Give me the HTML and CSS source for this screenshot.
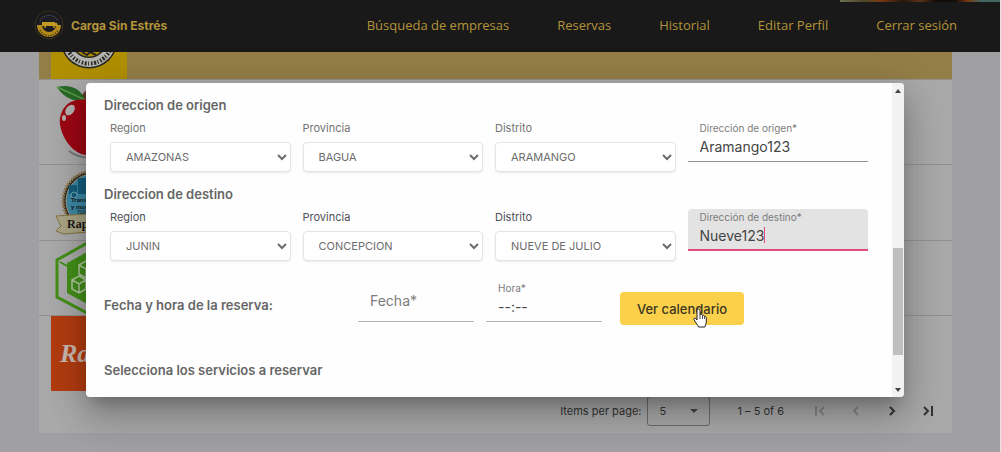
FILE: index.html
```html
<!DOCTYPE html>
<html lang="es">
<head>
<meta charset="utf-8">
<meta name="viewport" content="width=device-width, initial-scale=1">
<title>Carga Sin Estrés</title>
<link rel="stylesheet" href="styles.css">
</head>
<body>
<header class="topbar">
  <a class="brand" href="#">
    <svg class="brand-logo" viewBox="0 0 30 30" aria-hidden="true">
      <circle cx="15" cy="15" r="14" fill="#161616" stroke="#3f3421"/>
      <circle cx="15" cy="15" r="12" fill="#1c1d22"/>
      <path d="M3 15h24a12 12 0 0 1-24 0z" fill="#b48a18"/>
      <path d="M8 15h14a7 7 0 0 1-14 0z" fill="#1c1d22"/>
      <path d="M8 12h13v4H8zM21 13h2l1 3h-3z" fill="#c49a20"/>
      <circle cx="11" cy="17" r="1" fill="#c49a20"/><circle cx="20" cy="17" r="1" fill="#c49a20"/>
      <path d="M6 11a10 10 0 0 1 18 0" fill="none" stroke="#666" stroke-dasharray="1 1"/>
      <path d="M6 20a10 10 0 0 0 18 0" fill="none" stroke="#5d4817" stroke-width="1.5" stroke-dasharray="1.5 1"/>
    </svg>
    <span>Carga Sin Estrés</span>
  </a>
  <nav class="nav">
    <a href="#">Búsqueda de empresas</a>
    <a href="#">Reservas</a>
    <a href="#">Historial</a>
    <a href="#">Editar Perfil</a>
    <a href="#">Cerrar sesión</a>
  </nav>
  <div class="banner-edge"></div>
</header>

<main class="page">
  <table class="companies">
    <tbody>
      <tr class="row-highlight"><td>
        <svg width="76" height="27" viewBox="0 0 76 27" aria-hidden="true">
          <rect width="76" height="27" fill="#b09000"/>
          <circle cx="38" cy="-12" r="28.500" fill="#292820"/>
          <circle cx="38" cy="-12" r="27" fill="#b5b5b2"/>
          <circle cx="38" cy="-12" r="18" fill="#292820"/>
          <circle cx="38" cy="-12" r="16.500" fill="#b09000"/>
          <path d="M31 0l5 3 3-3 6 3" fill="none" stroke="#292820" stroke-width="2"/>
          <path d="M17 -2A23 23 0 0 0 59 -2" fill="none" stroke="#292820" stroke-width="4" stroke-dasharray="1.500 1.500 2 1.500 1 2"/>
        </svg></td></tr>
      <tr class="row-tall"><td>
        <svg width="76" height="84" viewBox="0 0 76 84" aria-hidden="true">
          <path d="M30 17c4-7 9-10 12-9l-5 15z" fill="#60372a"/>
          <path d="M6 7c10-3 24 0 28 13C23 23 12 17 6 7z" fill="#286a27"/>
          <path d="M6 7c11 5 20 9 28 13" stroke="#5c9849" stroke-width="1.500" fill="none"/>
          <path d="M37 20C23 18 12 23 9 38c-2 15 12 37 27 37 21 0 36-15 35-36-2-16-17-23-34-19z" fill="#9d0713"/>
          <path d="M59 30c9 18-3 38-23 45 23 0 36-15 35-36z" fill="#760711"/>
          <ellipse cx="19" cy="30" rx="4" ry="6" transform="rotate(38 19 30)" fill="#b5b0af"/>
          <ellipse cx="13" cy="38" rx="2" ry="3" fill="#b5b0af"/>
          <path d="M18 71c12 9 31 9 40 1" fill="none" stroke="#777" stroke-width="2"/>
        </svg></td></tr>
      <tr><td>
        <svg width="76" height="75" viewBox="0 0 76 75" aria-hidden="true">
          <circle cx="42" cy="36" r="30" fill="#2d2920" stroke="#927c56" stroke-width="3" stroke-dasharray="2 1"/>
          <circle cx="42" cy="36" r="27" fill="#3c89a5" stroke="#a3977b"/>
          <path d="M27 13h22v16H27zM18 20h8v9h-8z" fill="#155d7e"/>
          <circle cx="23" cy="30" r="3" fill="#155d7e" stroke="#75a9b9"/><circle cx="39" cy="30" r="3" fill="#155d7e" stroke="#75a9b9"/>
          <path d="M5 51l45-3 14 4-3 13-48 4-8-3 5-5z" fill="#aaa585" stroke="#827241"/>
          <text x="20" y="37" class="art-small">Transportes</text>
          <text x="20" y="44" class="art-small">y mudanzas</text>
          <text x="26" y="49" class="art-tiny">7000</text>
          <text x="16" y="63" class="art-ribbon">Rapid</text>
        </svg></td></tr>
      <tr><td>
        <svg width="76" height="74" viewBox="0 0 76 74" aria-hidden="true">
          <path d="M38 1L70 19v37L38 73 6 56V19z" fill="#aaa" stroke="#438f18" stroke-width="3"/>
          <path d="M38 10L16 22v30l22 12 22-12V22z" fill="#438f18"/>
          <path d="M9 21l7 4" stroke="#438f18" stroke-width="2"/>
          <path d="M35 20l8 4v9l-8 4-7-4v-9zm-7 4l7 4 8-4m-8 4v9M28 35l7 4v9l-7 4-7-4v-9zm-7 4l7 4 7-4m-7 4v9" fill="none" stroke="#b0c6a0" stroke-width="1.500"/>
        </svg></td></tr>
      <tr><td>
        <svg width="76" height="75" viewBox="0 0 76 75" aria-hidden="true">
          <rect width="76" height="75" fill="#b23c10"/>
          <text x="9" y="46" class="art-script">Rappi</text>
        </svg></td></tr>
    </tbody>
  </table>
  <div class="paginator">
    <label for="page-size">Items per page:</label>
    <span class="page-size">
      <select id="page-size"><option>5</option></select>
      <svg viewBox="0 0 8 4" aria-hidden="true"><path d="M0 0h8L4 4z"/></svg>
    </span>
    <span class="range">1 – 5 of 6</span>
    <button type="button" disabled aria-label="Primera página"><svg viewBox="0 0 12 12"><path d="M2 1v10M10 2L6 6l4 4"/></svg></button>
    <button type="button" disabled aria-label="Página anterior"><svg viewBox="0 0 12 12"><path d="M8 2L4 6l4 4"/></svg></button>
    <button type="button" aria-label="Página siguiente"><svg viewBox="0 0 12 12"><path d="M4 2l4 4-4 4"/></svg></button>
    <button type="button" aria-label="Última página"><svg viewBox="0 0 12 12"><path d="M2 2l4 4-4 4M10 1v10"/></svg></button>
  </div>
</main>

<div class="overlay">
  <div class="dialog" role="dialog" aria-label="Reserva">
    <form class="dialog-body">
      <h2>Direccion de origen</h2>
      <div class="address">
        <div class="choice"><label for="o-region">Region</label><select id="o-region"><option>AMAZONAS</option></select></div>
        <div class="choice"><label for="o-prov">Provincia</label><select id="o-prov"><option>BAGUA</option></select></div>
        <div class="choice"><label for="o-dist">Distrito</label><select id="o-dist"><option>ARAMANGO</option></select></div>
        <div class="field"><label for="o-dir">Dirección de origen*</label><input id="o-dir" type="text" value="Aramango123"></div>
      </div>
      <h2>Direccion de destino</h2>
      <div class="address address-active">
        <div class="choice"><label for="d-region">Region</label><select id="d-region"><option>JUNIN</option></select></div>
        <div class="choice"><label for="d-prov">Provincia</label><select id="d-prov"><option>CONCEPCION</option></select></div>
        <div class="choice"><label for="d-dist">Distrito</label><select id="d-dist"><option>NUEVE DE JULIO</option></select></div>
        <div class="field field-focused"><label for="d-dir">Dirección de destino*</label>
          <div class="field-line"><input id="d-dir" type="text" value="Nueve123"><i class="caret"></i></div></div>
      </div>
      <div class="schedule">
        <h2>Fecha y hora de la reserva:</h2>
        <div class="field field-empty"><label for="fecha">Fecha*</label><input id="fecha" type="text"></div>
        <div class="field field-time"><label for="hora">Hora*</label><input id="hora" type="text" value="--:--"></div>
        <button class="primary" type="button">Ver calendario
          <svg class="pointer" viewBox="0 0 14 20" aria-hidden="true"><path d="M4 12V2.500a1.500 1.500 0 0 1 3 0V7c1-1 2.500-.5 2.500.5C10.500 7 11.500 7.300 11.500 8.500c1-.5 1.800.2 1.800 1.200V14c0 2-1 3-1.500 5H5.500C5 17 2.500 15 1 11.500.500 10 2 9.500 2.800 10.500z" fill="#fff" stroke="#222"/><path d="M7 7v4M9.500 8v3M11.500 9v2" stroke="#222" stroke-width=".8"/></svg>
        </button>
      </div>
      <h2>Selecciona los servicios a reservar</h2>
    </form>
    <div class="scrollbar" aria-hidden="true">
      <svg viewBox="0 0 6 4"><path d="M0 4h6L3 0z"/></svg>
      <div class="thumb"></div>
      <svg viewBox="0 0 6 4"><path d="M0 0h6L3 4z"/></svg>
    </div>
  </div>
</div>
</body>
</html>
```
FILE: styles.css
```css
* { box-sizing: border-box; }
body {
  margin: 0;
  min-height: 100vh;
  position: relative;
  overflow: hidden;
  background: #a0a0a2;
  border-right: 1px solid #e4e4e4;
  font-family: Inter, "Open Sans", sans-serif;
  font-size: 13px;
  color: #666;
}
a { color: inherit; text-decoration: none; }
input, select, button { font: inherit; color: inherit; }
h2 { margin: 0; font-size: 13px; line-height: 20px; font-weight: 600; color: #666; }

.topbar {
  position: relative;
  display: flex;
  align-items: center;
  justify-content: space-between;
  height: 52px;
  padding: 0 43px 2px 34px;
  background: #191919;
  color: #b4943a;
}
.brand { display: flex; align-items: center; gap: 7px; font-size: 12px; font-weight: 700; }
.brand-logo { width: 30px; height: 30px; }
.nav { display: flex; gap: 48px; font-family: "Open Sans", Inter, sans-serif; font-size: 13px; }
.banner-edge {
  position: absolute;
  top: 0;
  right: 0;
  width: 16%;
  height: 2px;
  background: linear-gradient(90deg, #6c7050, #4d4527 15%, #7a3b14 25%, #25160c 40%, #5e3216 50%, #120c08 60%, #120c08 72%, #7a3b14 80%, #446660 88%, #446660);
}

.page { margin: 0 48px 0 39px; background: #a9a9a9; }
.companies { width: 100%; border-collapse: separate; border-spacing: 0; }
.companies td { padding: 0 0 0 12px; border-bottom: 1px solid #929292; }
.companies svg { display: block; }
.companies .row-highlight td { background: #947e47; }
.companies tr:last-child td { border-bottom: 0; }
.art-small { font: 700 6px "Liberation Sans", sans-serif; fill: #151b20; }
.art-tiny { font: 5px "Liberation Sans", sans-serif; fill: #151b20; }
.art-ribbon { font: 700 12px "Liberation Serif", serif; fill: #171717; }
.art-script { font: italic 700 26px "Liberation Serif", serif; fill: #c7b7ae; }

.paginator {
  display: flex;
  align-items: center;
  justify-content: flex-end;
  height: 42px;
  padding: 0 6px 2px 0;
  font-size: 11px;
  color: #343434;
}
.page-size { position: relative; margin: 0 27px 0 6px; }
.page-size select {
  display: block;
  appearance: none;
  width: 63px;
  height: 30px;
  padding: 0 11px;
  border: 1px solid #6d6d6d;
  border-radius: 3px;
  background: transparent;
}
.page-size svg { position: absolute; right: 12px; top: 13px; width: 8px; height: 4px; fill: #444; }
.range { margin-right: 18px; }
.paginator button { display: grid; place-items: center; width: 36px; height: 30px; padding: 0; border: 0; background: none; color: #333; }
.paginator button:disabled { color: #858585; }
.paginator button svg { width: 12px; height: 12px; fill: none; stroke: currentColor; stroke-width: 2; }

.overlay { position: absolute; inset: 0; padding: 83px 96px 0 86px; }
.dialog {
  display: flex;
  overflow: hidden;
  border-radius: 4px;
  background: #fefefe;
  box-shadow: 0 10px 14px -6px rgba(0,0,0,.22), 0 20px 34px 2px rgba(0,0,0,.16), 0 8px 40px 6px rgba(0,0,0,.12);
}
.dialog-body { flex: 1; min-width: 0; padding: 12px 18px 17px; }
.address {
  display: grid;
  grid-template-columns: repeat(4, minmax(0, 1fr));
  gap: 12px;
  padding: 4px 6px 12px;
}
.choice label { display: block; font-size: 11px; line-height: 18px; margin-bottom: 5px; color: #747474; }
.address-active .choice label { color: #50505a; }
.choice select {
  display: block;
  width: 100%;
  height: 30px;
  padding: 0 0 0 11px;
  border: 1px solid #e4e4e4;
  border-radius: 4px;
  background: #fff;
  box-shadow: 0 1px 2px rgba(0,0,0,.08);
  font-size: 11px;
  color: #6c6c6c;
}
.field { align-self: start; height: 42px; margin-top: 1px; padding: 0 12px; border-bottom: 1px solid #929292; }
.field label { display: block; font-size: 10px; line-height: 16px; color: #7c7c7c; }
.field input { display: block; width: 100%; height: 20px; padding: 0; border: 0; outline: 0; background: transparent; font-size: 14px; color: #444; }
.field-focused { border-radius: 4px 4px 0 0; border-bottom: 2px solid #df4c7f; background: #e3e3e3; }
.field-line { display: flex; align-items: center; }
.field-line input { width: auto; field-sizing: content; }
.caret { width: 1px; height: 16px; background: #df4c7f; }
.schedule {
  display: grid;
  grid-template-columns: 242px 116px 116px 130px;
  gap: 12px;
  align-items: start;
  padding: 7px 0 35px;
}
.schedule h2 { margin-top: 15px; }
.schedule .field { margin: 0; border-bottom-color: #b5b5b5; }
.field-empty label { font-size: 14px; line-height: 41px; }
.field-empty input { height: 0; }
.primary {
  position: relative;
  height: 33px;
  margin: 12px 0 0 6px;
  padding: 0;
  border: 0;
  border-radius: 4px;
  background: #fbd04b;
  color: #3c3720;
  font-weight: 500;
}
.pointer { position: absolute; left: 73px; top: 16px; width: 14px; height: 20px; fill: none; }
.scrollbar { display: flex; flex-direction: column; align-items: center; width: 12px; padding: 6px 0 5px; background: #f2f2f2; }
.scrollbar svg { width: 6px; height: 4px; fill: #444; }
.thumb { width: 10px; height: 107px; margin: auto 0 33px; background: #bfbfbf; }
```
